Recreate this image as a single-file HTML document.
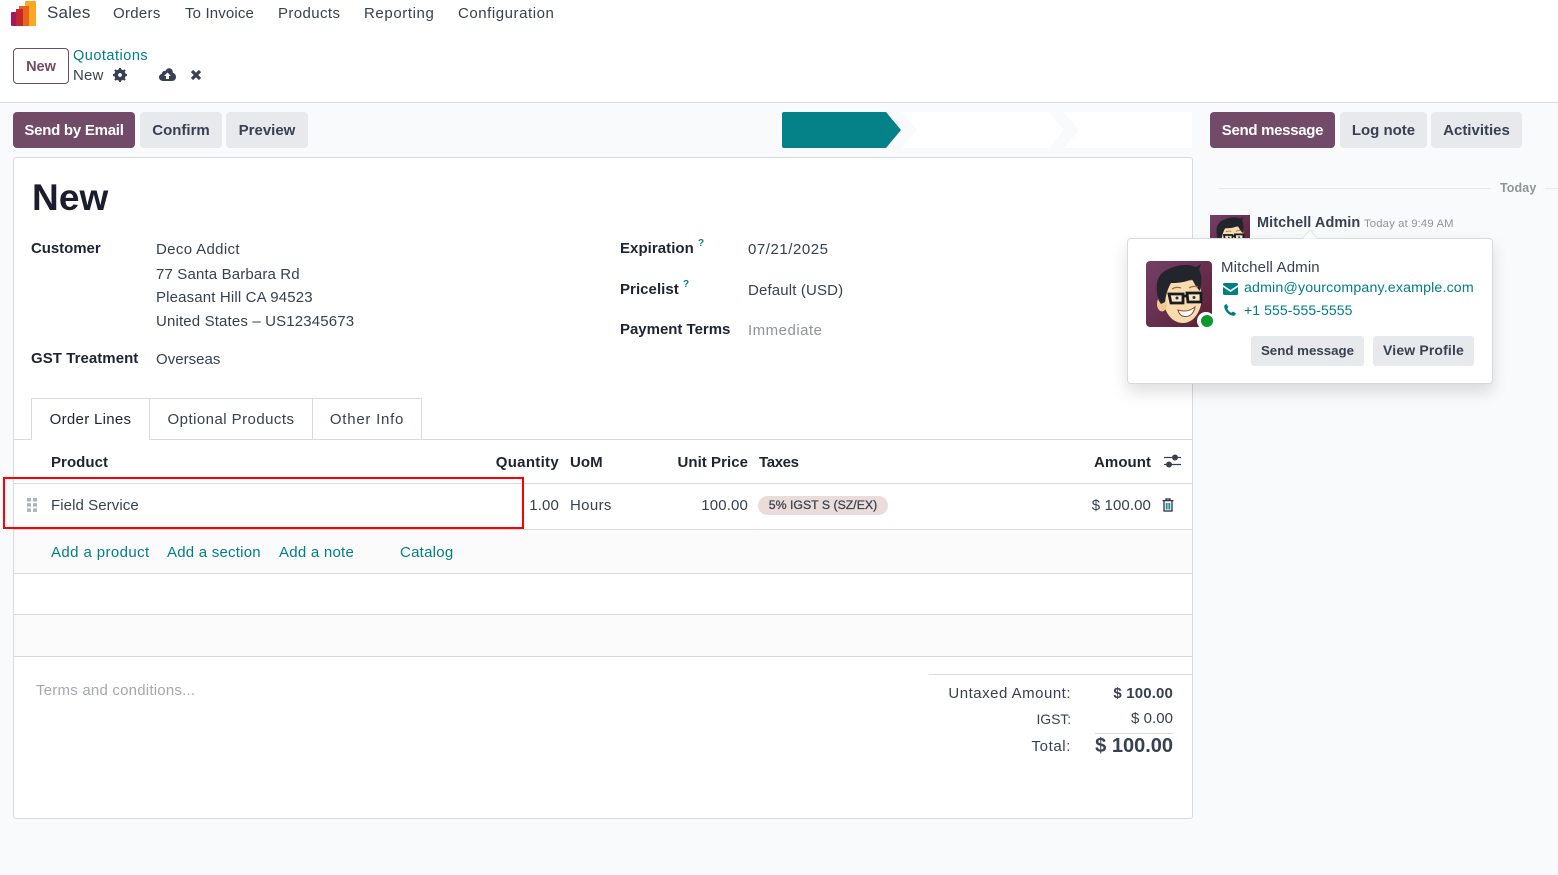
<!DOCTYPE html>
<html><head><meta charset="utf-8"><title>Sales</title>
<style>
html,body{margin:0;padding:0}
body{width:1558px;height:875px;position:relative;overflow:hidden;background:#f9fafb;font-family:"Liberation Sans",sans-serif;font-size:15px;color:#374151}
.t{position:absolute;white-space:nowrap;line-height:20px;letter-spacing:.15px;margin-top:1px}
.r{position:absolute;white-space:nowrap;line-height:20px;text-align:right;letter-spacing:.15px;margin-top:1px}
.b{font-weight:700;color:#1f2433;letter-spacing:.05px}
.l{color:#017e84}
.btn{position:absolute;height:36px;line-height:38px;text-align:center;border-radius:4px;background:#e7e9ed;color:#374151;font-weight:700;font-size:15px}
.pri{background:#714b67;color:#fff}
.h{position:absolute;background:#d8dadd;height:1px}
.box{position:absolute;box-sizing:border-box}
svg{position:absolute;display:block}
</style></head><body>
<svg width="0" height="0" style="position:absolute"><defs>
<linearGradient id="avbg" x1="0" y1="0" x2="1" y2="1"><stop offset="0" stop-color="#74406a"/><stop offset="1" stop-color="#5a1f33"/></linearGradient>
<symbol id="av" viewBox="0 0 66 66">
<rect width="66" height="66" fill="url(#avbg)"/>
<path d="M17 34C17 50 25 62 37 62C48 62 56 50 56 34L53 19L24 20Z" fill="#f8dcae"/>
<ellipse cx="16" cy="43" rx="5" ry="7.500" fill="#f2c995"/>
<path d="M13 40C8 24 11 12 23 8C32 3 44 3 50 6L55 3L53 9C56 13 56 21 54 30C50 26 48 22 46 18C38 22 30 22 25 22C22 27 20 33 19 41L15 43Z" fill="#23252d"/>
<path d="M23 33H37V42H25ZM41 32H55V41H42ZM37 35H41" fill="#f9e6c6" stroke="#1a1b20" stroke-width="2.800"/>
<path d="M32 49C38 51 44 50 49 46C48 52 44 56 39 55.500C35 55.500 33 53 32 49Z" fill="#fff" stroke="#8a4a33" stroke-width="1"/>
<circle cx="31" cy="37" r="1.500" fill="#333"/><circle cx="48" cy="36.500" r="1.500" fill="#333"/>
<path d="M26 28C29 26 32 26 35 27M43 27C46 25 49 25 52 26" fill="none" stroke="#a0683f" stroke-width="1.300"/>
</symbol>
</defs></svg>

<!-- top -->
<div class="box" style="left:0;top:0;width:1558px;height:103px;background:#fff;border-bottom:1px solid #d8dadd"></div>
<svg style="left:11px;top:1px" width="26" height="25" viewBox="0 0 26 25">
<rect x="14" y="0" width="11" height="25" rx="1" fill="#f9a825"/>
<rect x="8" y="5" width="10" height="20" fill="#e8641c"/>
<rect x="0" y="11" width="12" height="14" rx="1" fill="#a5195c"/>
<rect x="5" y="8" width="7" height="17" fill="#c1272d"/>
</svg>
<div class="t" style="left:47px;top:2px;font-size:17px;color:#374151;letter-spacing:.2px">Sales</div>
<div class="t" style="left:113px;top:3px;letter-spacing:.3px">Orders</div>
<div class="t" style="left:185px;top:3px">To Invoice</div>
<div class="t" style="left:278px;top:3px;letter-spacing:.4px">Products</div>
<div class="t" style="left:364px;top:3px;letter-spacing:.6px">Reporting</div>
<div class="t" style="left:458px;top:3px;letter-spacing:.55px">Configuration</div>

<div class="box" style="left:13px;top:48px;width:56px;height:36px;border:1px solid #714b67;border-radius:4px;background:#fff;text-align:center;line-height:36px;font-weight:700;color:#714b67;font-size:14.500px">New</div>
<div class="t l" style="left:73px;top:45px;font-size:14.500px;letter-spacing:.5px">Quotations</div>
<div class="t" style="left:73px;top:65px">New</div>
<svg style="left:113px;top:68px" width="14" height="14" viewBox="0 0 14 14"><circle cx="7" cy="7" r="4.200" fill="none" stroke="#374151" stroke-width="3"/><path d="M7 0V14M0 7H14M2 2L12 12M12 2L2 12" stroke="#374151" stroke-width="2.200"/><circle cx="7" cy="7" r="1.900" fill="#fff"/></svg>
<svg style="left:159px;top:68px" width="17" height="13" viewBox="0 0 17 13"><path d="M4 13C1.500 13 0 11.300 0 9.300C0 7.500 1.200 6.200 2.800 5.900C3 3.700 4.800 2.500 6.500 3C7.500.8 9.500 0 11 .4C13 1 14 2.700 13.800 4.800C15.700 5.300 17 7 17 9C17 11.300 15.200 13 13 13Z" fill="#374151"/><path d="M8.500 4.500L12 8H10V11H7V8H5Z" fill="#fff"/></svg>
<svg style="left:190px;top:69px" width="12" height="12" viewBox="0 0 12 12"><path d="M2 2L10 10M10 2L2 10" stroke="#374151" stroke-width="3.200"/></svg>

<!-- action row -->
<div class="btn pri" style="left:13px;top:112px;width:122px;letter-spacing:-.25px">Send by Email</div>
<div class="btn" style="left:140px;top:112px;width:82px">Confirm</div>
<div class="btn" style="left:226px;top:112px;width:82px">Preview</div>
<svg style="left:782px;top:112px" width="411" height="36" viewBox="0 0 411 36">
<path d="M0 2Q0 0 2 0H104L119 18L104 36H2Q0 36 0 34Z" fill="#058287"/>
<path d="M120 0H267L282 18L267 36H120L135 18Z" fill="#fff"/>
<path d="M282 0H410V36H282L297 18Z" fill="#fff"/>
</svg>
<div class="btn pri" style="left:1210px;top:112px;width:125px;letter-spacing:-.3px">Send message</div>
<div class="btn" style="left:1340px;top:112px;width:87px">Log note</div>
<div class="btn" style="left:1431px;top:112px;width:91px">Activities</div>

<!-- sheet -->
<div class="box" style="left:13px;top:157px;width:1180px;height:662px;background:#fff;border:1px solid #d8dadd;border-radius:3px"></div>
<div class="t" style="left:32px;top:176px;font-size:37px;line-height:42px;font-weight:700;color:#1b1d2e;letter-spacing:.1px">New</div>

<div class="t b" style="left:31px;top:238px;letter-spacing:-.05px">Customer</div>
<div class="t" style="left:156px;top:239px;letter-spacing:.35px">Deco Addict</div>
<div class="t" style="left:156px;top:264px">77 Santa Barbara Rd</div>
<div class="t" style="left:156px;top:287px">Pleasant Hill CA 94523</div>
<div class="t" style="left:156px;top:311px">United States – US12345673</div>
<div class="t b" style="left:31px;top:348px">GST Treatment</div>
<div class="t" style="left:156px;top:349px;letter-spacing:.03px">Overseas</div>

<div class="t b" style="left:620px;top:238px">Expiration</div>
<div class="t l" style="left:698px;top:233px;font-size:10px;font-weight:700">?</div>
<div class="t" style="left:748px;top:239px;letter-spacing:.55px">07/21/2025</div>
<div class="t b" style="left:620px;top:279px">Pricelist</div>
<div class="t l" style="left:683px;top:274px;font-size:10px;font-weight:700">?</div>
<div class="t" style="left:748px;top:280px">Default (USD)</div>
<div class="t b" style="left:620px;top:319px;letter-spacing:-.02px">Payment Terms</div>
<div class="t" style="left:748px;top:320px;color:#8f9499;letter-spacing:.5px">Immediate</div>

<!-- tabs -->
<div class="h" style="left:14px;top:439px;width:1178px"></div>
<div class="box" style="left:31px;top:398px;width:119px;height:42px;background:#fff;border:1px solid #d8dadd;border-bottom:0;text-align:center;line-height:42px;color:#1f2433;letter-spacing:.3px">Order Lines</div>
<div class="box" style="left:149px;top:398px;width:164px;height:41px;border:1px solid #d8dadd;border-bottom:0;border-left:0;text-align:center;line-height:42px;padding-left:1px;letter-spacing:.45px">Optional Products</div>
<div class="box" style="left:312px;top:398px;width:110px;height:41px;border:1px solid #d8dadd;border-bottom:0;text-align:center;line-height:42px;letter-spacing:.75px">Other Info</div>

<!-- table -->
<div class="t b" style="left:51px;top:452px">Product</div>
<div class="r b" style="right:999px;top:452px;letter-spacing:.3px">Quantity</div>
<div class="t b" style="left:570px;top:452px">UoM</div>
<div class="r b" style="right:810px;top:452px">Unit Price</div>
<div class="t b" style="left:759px;top:452px;letter-spacing:-.35px">Taxes</div>
<div class="r b" style="right:407px;top:452px">Amount</div>
<svg style="left:1164px;top:454px" width="17" height="15" viewBox="0 0 17 15"><path d="M0 3.500H17M0 10.500H17" stroke="#374151" stroke-width="1.300"/><circle cx="11" cy="3.500" r="3" fill="#374151"/><circle cx="5" cy="10.500" r="3" fill="#374151"/></svg>
<div class="h" style="left:14px;top:483px;width:1178px"></div>
<div class="h" style="left:14px;top:529px;width:1178px"></div>
<div class="h" style="left:14px;top:573px;width:1178px"></div>
<div class="h" style="left:14px;top:614px;width:1178px"></div>
<div class="h" style="left:14px;top:656px;width:1178px"></div>
<div class="box" style="left:14px;top:530px;width:1178px;height:43px;background:#fbfbfc"></div>
<div class="box" style="left:14px;top:615px;width:1178px;height:41px;background:#fbfbfc"></div>

<svg style="left:27px;top:498px" width="10" height="14" viewBox="0 0 10 14" fill="#adb5bd"><rect x="0" y="0" width="4" height="3.500"/><rect x="6" y="0" width="4" height="3.500"/><rect x="0" y="5.200" width="4" height="3.500"/><rect x="6" y="5.200" width="4" height="3.500"/><rect x="0" y="10.400" width="4" height="3.500"/><rect x="6" y="10.400" width="4" height="3.500"/></svg>
<div class="t" style="left:51px;top:495px;letter-spacing:.08px">Field Service</div>
<div class="r" style="right:999px;top:495px">1.00</div>
<div class="t" style="left:570px;top:495px;letter-spacing:.35px">Hours</div>
<div class="r" style="right:810px;top:495px">100.00</div>
<div class="box" style="left:758px;top:496px;width:130px;height:19px;border-radius:10px;background:#eadcd9;text-align:center;line-height:19px;font-size:12.300px;font-weight:400;color:#374151;-webkit-text-stroke:.25px #374151">5% IGST S (SZ/EX)</div>
<div class="r" style="right:407px;top:495px;letter-spacing:.1px">$ 100.00</div>
<svg style="left:1162px;top:498px" width="12" height="14" viewBox="0 0 12 14"><path d="M.5 2.700H11.500M4 2.500V1H8V2.500M2 3V13H10V3" fill="none" stroke="#1f2433" stroke-width="1.200"/><path d="M4.300 5V11.500M6 5V11.500M7.700 5V11.500" stroke="#017e84" stroke-width="1.100"/></svg>

<div class="t l" style="left:51px;top:542px;letter-spacing:.4px">Add a product</div>
<div class="t l" style="left:167px;top:542px;letter-spacing:.23px">Add a section</div>
<div class="t l" style="left:279px;top:542px;letter-spacing:.25px">Add a note</div>
<div class="t l" style="left:400px;top:542px;letter-spacing:.25px">Catalog</div>

<div class="t" style="left:36px;top:680px;color:#a4a8ad;letter-spacing:.22px">Terms and conditions...</div>
<div class="h" style="left:929px;top:674px;width:263px"></div>
<div class="r" style="right:487px;top:683px;letter-spacing:.5px">Untaxed Amount:</div>
<div class="r" style="right:385px;top:683px;font-weight:700">$ 100.00</div>
<div class="r" style="right:487px;top:708px;font-size:14px;letter-spacing:-.1px">IGST:</div>
<div class="r" style="right:385px;top:708px;letter-spacing:.05px">$ 0.00</div>
<div class="h" style="left:1095px;top:733px;width:78px"></div>
<div class="r" style="right:487px;top:736px;letter-spacing:.6px">Total:</div>
<div class="r" style="right:385px;top:734px;font-size:20px;line-height:22px;font-weight:700;letter-spacing:0">$ 100.00</div>

<!-- red highlight -->
<div class="box" style="left:3px;top:477px;width:521px;height:52px;border:2px solid #f00"></div>

<!-- chatter -->
<div class="h" style="left:1219px;top:188px;width:272px;background:#e7e9ed"></div>
<div class="h" style="left:1545px;top:188px;width:13px;background:#e7e9ed"></div>
<div class="t" style="left:1500px;top:177px;font-size:12.500px;font-weight:700;color:#8f9499;letter-spacing:.1px">Today</div>
<svg style="left:1210px;top:215px" width="40" height="40" viewBox="0 0 40 40"><use href="#av" width="40" height="40"/></svg>
<div class="t b" style="left:1257px;top:212px;color:#374151;font-size:14.500px">Mitchell Admin</div>
<div class="t" style="left:1364px;top:213px;font-size:11.300px;color:#8f9499">Today at 9:49 AM</div>

<!-- popover -->
<svg style="left:1300px;top:228px;z-index:3" width="20" height="11" viewBox="0 0 20 11"><path d="M2 11L10 2L18 11Z" fill="#fff" stroke="#e3e5e8"/></svg>
<div class="box" style="left:1127px;top:238px;width:366px;height:146px;background:#fff;border:1px solid #d8dadd;border-radius:4px;box-shadow:0 8px 16px rgba(0,0,0,.13);z-index:2"></div>
<div style="position:absolute;left:0;top:0;z-index:4">
<svg style="left:1146px;top:261px;border-radius:4px" width="66" height="66" viewBox="0 0 66 66"><use href="#av" width="66" height="66"/></svg>
<div class="box" style="left:1197px;top:312px;width:18px;height:18px;border-radius:50%;background:#fff"></div>
<div class="box" style="left:1201px;top:315px;width:12px;height:12px;border-radius:50%;background:#0a9a2c"></div>
<div class="t" style="left:1221px;top:257px">Mitchell Admin</div>
<svg style="left:1223px;top:283px" width="15" height="12" viewBox="0 0 15 12"><path d="M0 1.500Q0 0 1.500 0H13.500Q15 0 15 1.500V2L7.500 7L0 2ZM0 4L7.500 9L15 4V10.500Q15 12 13.500 12H1.500Q0 12 0 10.500Z" fill="#017e84"/></svg>
<div class="t l" style="left:1244px;top:277px;font-size:14.200px">admin@yourcompany.example.com</div>
<svg style="left:1224px;top:304px" width="12" height="12" viewBox="0 0 12 12"><path d="M2.500 0L4.500 3L3.300 4.500C4 6.500 5.500 8 7.500 8.700L9 7.500L12 9.500C11.500 11 10.500 12 9 11.800C4.500 11 1 7.500 .2 3C0 1.500 1 .5 2.500 0Z" fill="#017e84"/></svg>
<div class="t l" style="left:1244px;top:299px;font-size:14px;letter-spacing:.1px">+1 555-555-5555</div>
<div class="box" style="position:absolute;left:1251px;top:336px;width:113px;height:30px;line-height:29px;background:#e7e9ed;border-radius:3px;text-align:center;font-weight:700;font-size:13.300px;white-space:nowrap">Send message</div>
<div class="box" style="position:absolute;left:1373px;top:336px;width:101px;height:30px;line-height:29px;background:#e7e9ed;border-radius:3px;text-align:center;font-weight:700;font-size:14px;letter-spacing:.15px;white-space:nowrap">View Profile</div>
</div>
</body></html>
